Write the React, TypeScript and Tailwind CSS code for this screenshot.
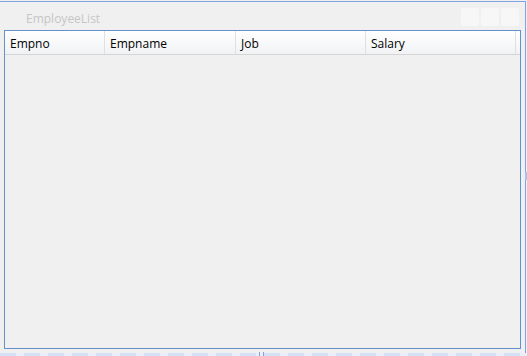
import React from 'react';

const columns = [
  { name: 'Empno', width: 'w-[100px]' },
  { name: 'Empname', width: 'w-[131px]' },
  { name: 'Job', width: 'w-[130px]' },
  { name: 'Salary', width: 'w-[150px]' },
];

const App: React.FC = () => {
  return (
    <div className="relative w-[527px] h-[356px] bg-[#f0f0f0] overflow-hidden font-['Open_Sans',sans-serif]">
      {/* window frame */}
      <div className="mt-[1px] w-[526px] h-[352px] border-t border-r border-[#7ea4e4] flex flex-col">
        <div className="h-[28px] flex items-center pl-[26px] pr-[6px]">
          <span className="text-[12px] text-[#c6c6c6] leading-none mt-[6px]">EmployeeList</span>
          <div className="ml-auto flex gap-[2px] mt-[2px]">
            <div className="w-[18px] h-[18px] rounded-[2px] bg-[#f7f7f7]" />
            <div className="w-[18px] h-[18px] rounded-[2px] bg-[#f7f7f7]" />
            <div className="w-[18px] h-[18px] rounded-[2px] bg-[#f7f7f7]" />
          </div>
        </div>

        {/* grid */}
        <div className="ml-[4px] w-[517px] h-[319px] border border-[#6690ca] bg-[#f0f0f0]">
          <div className="flex h-[24px] border-b border-[#d5d5d5] bg-gradient-to-b from-white to-[#f1f2f4]">
            {columns.map((c) => (
              <div
                key={c.name}
                className={`${c.width} border-r border-[#e0e0e0] flex items-center pl-[5px] pt-[2px] text-[12px] text-black`}
              >
                {c.name}
              </div>
            ))}
          </div>
        </div>
      </div>

      {/* side grip */}
      <div className="absolute right-0 top-[172px] w-[2px] h-[8px] bg-[#a9c1ee]" />
      {/* bottom dashed edge */}
      <div className="absolute left-0 bottom-0 w-full h-[3px] bg-[repeating-linear-gradient(90deg,#d3e0f6_0,#d3e0f6_16px,#e9eef8_16px,#e9eef8_24px)]" />
      <div className="absolute left-[259px] bottom-0 w-[5px] h-[4px] border-x border-[#7ea4e4]" />
    </div>
  );
};

export default App;
